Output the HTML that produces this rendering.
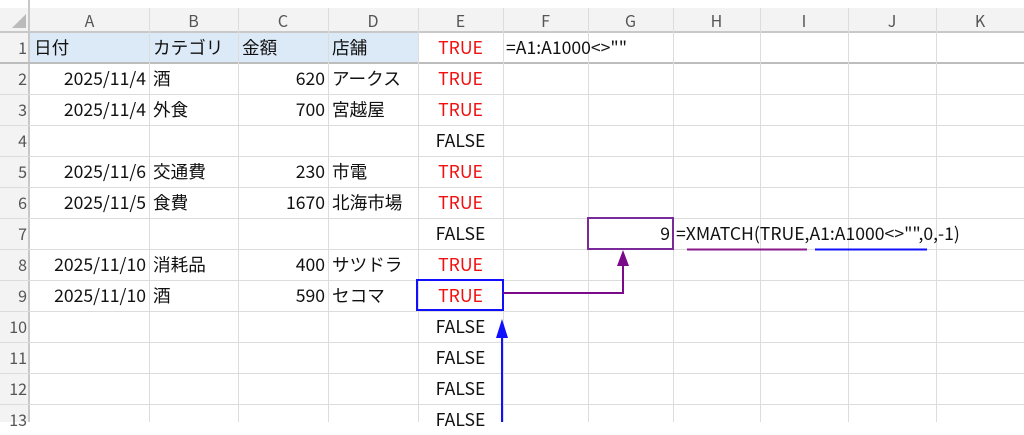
<!DOCTYPE html>
<html><head><meta charset="utf-8"><style>
body{margin:0;width:1024px;height:422px;overflow:hidden;background:#fff;font-family:"Liberation Sans","Noto Sans CJK JP",sans-serif;}
.w{position:relative;width:1024px;height:422px;}
.t{position:absolute;font-family:"Noto Sans CJK JP","Liberation Sans",sans-serif;font-size:17.6px;line-height:31px;height:31px;color:#111;white-space:nowrap;}
.r{text-align:right}.c{text-align:center}.red{color:#f01010}
.hl{position:absolute;left:0;width:1024px;height:1px;background:#dcdcdc}
.vl{position:absolute;top:8px;width:1px;height:414px;background:#dcdcdc}
.ch{position:absolute;top:8px;height:24px;line-height:24px;text-align:center;color:#555;font-size:16px;font-family:"Noto Sans CJK JP",sans-serif}
.rh{position:absolute;left:0;width:27px;text-align:right;color:#555;font-size:16px;line-height:31px;font-family:"Noto Sans CJK JP",sans-serif}
</style></head><body><div class="w">
<div style="position:absolute;left:0;top:8px;width:1024px;height:24px;background:#f3f3f3"></div>
<div style="position:absolute;left:0;top:32px;width:30px;height:390px;background:#f3f3f3"></div>
<div style="position:absolute;left:30px;top:32px;width:388px;height:31px;background:#dce9f6"></div>
<div style="position:absolute;left:28px;top:0;width:2px;height:422px;background:#c8c8c8"></div>
<div style="position:absolute;left:0;top:31px;width:1024px;height:2px;background:#c8c8c8"></div>
<div style="position:absolute;left:0;top:62px;width:1024px;height:2px;background:#bdbdbd"></div>
<svg style="position:absolute;left:12px;top:14px" width="14" height="14"><polygon points="14,0 14,14 0,14" fill="#bbb"/></svg>
<div class="vl" style="left:149px"></div><div class="vl" style="left:238px"></div><div class="vl" style="left:328px"></div><div class="vl" style="left:418px"></div><div class="vl" style="left:503px"></div><div class="vl" style="left:588px"></div><div class="vl" style="left:673px"></div><div class="vl" style="left:760px"></div><div class="vl" style="left:848px"></div><div class="vl" style="left:936px"></div>
<div class="hl" style="top:94px"></div><div class="hl" style="top:125px"></div><div class="hl" style="top:156px"></div><div class="hl" style="top:187px"></div><div class="hl" style="top:218px"></div><div class="hl" style="top:249px"></div><div class="hl" style="top:280px"></div><div class="hl" style="top:311px"></div><div class="hl" style="top:342px"></div><div class="hl" style="top:373px"></div><div class="hl" style="top:404px"></div>
<div class="ch" style="left:30px;width:119px">A</div><div class="ch" style="left:149px;width:89px">B</div><div class="ch" style="left:238px;width:90px">C</div><div class="ch" style="left:328px;width:90px">D</div><div class="ch" style="left:418px;width:85px">E</div><div class="ch" style="left:503px;width:85px">F</div><div class="ch" style="left:588px;width:85px">G</div><div class="ch" style="left:673px;width:87px">H</div><div class="ch" style="left:760px;width:88px">I</div><div class="ch" style="left:848px;width:88px">J</div><div class="ch" style="left:936px;width:88px">K</div>
<div class="rh" style="top:32px">1</div><div class="rh" style="top:63px">2</div><div class="rh" style="top:94px">3</div><div class="rh" style="top:125px">4</div><div class="rh" style="top:156px">5</div><div class="rh" style="top:187px">6</div><div class="rh" style="top:218px">7</div><div class="rh" style="top:249px">8</div><div class="rh" style="top:280px">9</div><div class="rh" style="top:311px">10</div><div class="rh" style="top:342px">11</div><div class="rh" style="top:373px">12</div><div class="rh" style="top:404px">13</div>
<div class="t" style="left:34px;top:32px">日付</div><div class="t" style="left:153px;top:32px">カテゴリ</div><div class="t" style="left:242px;top:32px">金額</div><div class="t" style="left:332px;top:32px">店舗</div>
<div class="t c red" style="left:418px;width:85px;top:32px">TRUE</div><div class="t" style="left:506px;top:32px">=A1:A1000&lt;&gt;""</div>
<div class="t r" style="left:30px;width:116px;top:63px">2025/11/4</div><div class="t" style="left:153px;top:63px">酒</div><div class="t r" style="left:238px;width:87px;top:63px">620</div><div class="t" style="left:332px;top:63px">アークス</div><div class="t c red" style="left:418px;width:85px;top:63px">TRUE</div>
<div class="t r" style="left:30px;width:116px;top:94px">2025/11/4</div><div class="t" style="left:153px;top:94px">外食</div><div class="t r" style="left:238px;width:87px;top:94px">700</div><div class="t" style="left:332px;top:94px">宮越屋</div><div class="t c red" style="left:418px;width:85px;top:94px">TRUE</div>
<div class="t c" style="left:418px;width:85px;top:125px">FALSE</div>
<div class="t r" style="left:30px;width:116px;top:156px">2025/11/6</div><div class="t" style="left:153px;top:156px">交通費</div><div class="t r" style="left:238px;width:87px;top:156px">230</div><div class="t" style="left:332px;top:156px">市電</div><div class="t c red" style="left:418px;width:85px;top:156px">TRUE</div>
<div class="t r" style="left:30px;width:116px;top:187px">2025/11/5</div><div class="t" style="left:153px;top:187px">食費</div><div class="t r" style="left:238px;width:87px;top:187px">1670</div><div class="t" style="left:332px;top:187px">北海市場</div><div class="t c red" style="left:418px;width:85px;top:187px">TRUE</div>
<div class="t c" style="left:418px;width:85px;top:218px">FALSE</div>
<div class="t r" style="left:30px;width:116px;top:249px">2025/11/10</div><div class="t" style="left:153px;top:249px">消耗品</div><div class="t r" style="left:238px;width:87px;top:249px">400</div><div class="t" style="left:332px;top:249px">サツドラ</div><div class="t c red" style="left:418px;width:85px;top:249px">TRUE</div>
<div class="t r" style="left:30px;width:116px;top:280px">2025/11/10</div><div class="t" style="left:153px;top:280px">酒</div><div class="t r" style="left:238px;width:87px;top:280px">590</div><div class="t" style="left:332px;top:280px">セコマ</div><div class="t c red" style="left:418px;width:85px;top:280px">TRUE</div>
<div class="t c" style="left:418px;width:85px;top:311px">FALSE</div><div class="t c" style="left:418px;width:85px;top:342px">FALSE</div><div class="t c" style="left:418px;width:85px;top:373px">FALSE</div><div class="t c" style="left:418px;width:85px;top:404px">FALSE</div>
<div class="t r" style="left:588px;width:82px;top:218px">9</div>
<div class="t" style="left:676px;top:218px">=XMATCH(TRUE,A1:A1000&lt;&gt;"",0,-1)</div>
<svg style="position:absolute;left:0;top:0" width="1024" height="422">
<rect x="417" y="280" width="86" height="30" fill="none" stroke="#1010ff" stroke-width="2"/>
<rect x="588" y="218" width="85" height="31" fill="none" stroke="#7b2a9a" stroke-width="2"/>
<line x1="687" y1="249.5" x2="807" y2="249.5" stroke="#8a1a8a" stroke-width="2"/>
<line x1="815" y1="249.5" x2="927" y2="249.5" stroke="#1010ff" stroke-width="2"/>
<polyline points="503,293 623,293 623,262" fill="none" stroke="#7a0a8a" stroke-width="2"/>
<polygon points="617,266 629,266 623,250" fill="#7a0a8a"/>
<line x1="502" y1="422" x2="502" y2="334" stroke="#1010ff" stroke-width="2"/>
<polygon points="496,338 508,338 502,319" fill="#1010ff"/>
</svg>
</div></body></html>
